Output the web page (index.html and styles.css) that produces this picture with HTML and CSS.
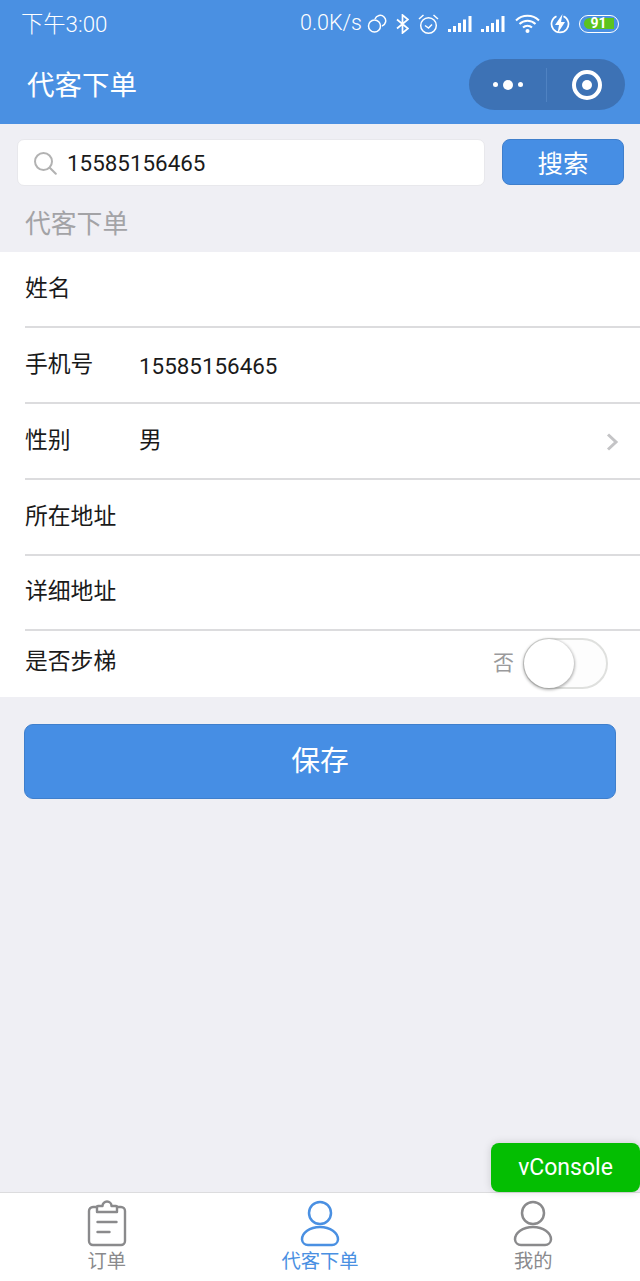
FILE: index.html
```html
<!DOCTYPE html>
<html lang="zh">
<head>
<meta charset="utf-8">
<title>代客下单</title>
<link rel="stylesheet" href="styles.css">
</head>
<body>
<div class="app">
  <header class="header">
    <div class="status">
      <span class="time">下午3:00</span>
      <div class="status-right">
        <span class="speed">0.0K/s</span>
        <svg class="si" width="20" height="20" viewBox="0 0 20 20" fill="none" stroke="#fff" stroke-width="1.500"><circle cx="7.500" cy="12" r="6"/><path d="M8 5a5.500 5.500 0 1 1 7 7"/></svg>
        <svg class="si bt" width="13" height="20" viewBox="0 0 13 20" fill="none" stroke="#fff" stroke-width="1.700"><path d="M1 5.500l11 9-5.500 4.500V1L12 5.500l-11 9"/></svg>
        <svg class="si alarm" width="21" height="22" viewBox="0 0 21 22" fill="none" stroke="#fff" stroke-width="1.500"><circle cx="10.500" cy="12.500" r="7.800"/><path d="M7 12.500l3.500 2.500 3.500-3.500M1 6l4.500-4M20 6l-4.500-4"/></svg>
        <svg class="si sig" width="24" height="18" viewBox="0 0 24 18" fill="#fff"><rect x="0" y="14" width="3" height="3"/><rect x="5" y="11" width="3" height="6"/><rect x="10" y="8" width="3" height="9"/><rect x="15" y="4.500" width="3" height="12.500"/><rect x="20.500" y="1" width="3" height="16"/></svg>
        <svg class="si sig" width="24" height="18" viewBox="0 0 24 18" fill="#fff"><rect x="0" y="14" width="3" height="3"/><rect x="5" y="11" width="3" height="6"/><rect x="10" y="8" width="3" height="9"/><rect x="15" y="4.500" width="3" height="12.500"/><rect x="20.500" y="1" width="3" height="16"/></svg>
        <svg class="si wifi" width="25" height="20" viewBox="0 0 25 20" fill="none" stroke="#fff" stroke-width="2"><path d="M1 6.500a16.500 16.500 0 0 1 23 0M4.500 10a11.500 11.500 0 0 1 16 0M8 13.500a6.500 6.500 0 0 1 9 0"/><circle cx="12.500" cy="17" r="2" fill="#fff" stroke="none"/></svg>
        <svg class="si flash" width="20" height="20" viewBox="0 0 20 20" fill="none"><path d="M6.500 2.200a8.500 8.500 0 1 0 7 0" stroke="#fff" stroke-width="1.700"/><path d="M12.500 0L5 11h4l-1.500 8.500L15 8h-4z" fill="#fff"/></svg>
        <div class="battery"><span class="battery-fill">91</span></div>
      </div>
    </div>
    <div class="nav">
      <h1 class="nav-title">代客下单</h1>
      <div class="capsule">
        <div class="cap-part cap-dots"><i class="dot"></i><i class="dot dot-big"></i><i class="dot"></i></div>
        <div class="cap-sep"></div>
        <div class="cap-part cap-right"><span class="target"></span></div>
      </div>
    </div>
  </header>

  <main class="main">
    <div class="search-row">
      <div class="search-box">
        <svg class="search-icon" width="24" height="24" viewBox="0 0 24 24" fill="none" stroke="#b2b2b2" stroke-width="2"><circle cx="10.500" cy="10.500" r="8.500"/><path d="M16.800 16.800l6 6" stroke-linecap="round"/></svg>
        <span class="search-text">15585156465</span>
      </div>
      <button class="search-btn">搜索</button>
    </div>
    <div class="section-title">代客下单</div>
    <div class="form">
      <div class="row"><span class="label">姓名</span></div>
      <div class="row"><span class="label">手机号</span><span class="value num">15585156465</span></div>
      <div class="row"><span class="label">性别</span><span class="value">男</span><svg class="chevron" width="13" height="18" viewBox="0 0 13 18" fill="none" stroke="#c4c4c6" stroke-width="3"><path d="M2 1.500l8 7.500-8 7.500"/></svg></div>
      <div class="row"><span class="label">所在地址</span></div>
      <div class="row row-short"><span class="label">详细地址</span></div>
      <div class="row row-last"><span class="label">是否步梯</span>
        <div class="switch-wrap"><span class="switch-label">否</span><div class="switch"><div class="knob"></div></div></div>
      </div>
    </div>
    <button class="save-btn">保存</button>
  </main>

  <nav class="tabbar">
    <div class="tab">
      <svg width="40" height="47" viewBox="0 0 40 47" fill="none" stroke="#8a8a8c" stroke-width="2.400" stroke-linejoin="round" stroke-linecap="round"><path d="M10 7H6a4 4 0 0 0-4 4v30a4 4 0 0 0 4 4h28a4 4 0 0 0 4-4V11a4 4 0 0 0-4-4h-4"/><path d="M10 12V7a1 1 0 0 1 1-1h4.500a4.500 4.500 0 0 1 9 0H29a1 1 0 0 1 1 1v5z"/><path d="M10.500 22h19M10.500 32h12"/></svg>
      <span class="tab-label">订单</span>
    </div>
    <div class="tab tab-active">
      <svg width="42" height="47" viewBox="0 0 42 47" fill="none" stroke="#4a90e2" stroke-width="2.500"><circle cx="21" cy="13" r="11"/><path d="M9 45a6 6 0 0 1-6-5.500C3 33 10.500 27 21 27s18 6 18 12.500a6 6 0 0 1-6 5.500z"/></svg>
      <span class="tab-label">代客下单</span>
    </div>
    <div class="tab">
      <svg width="42" height="47" viewBox="0 0 42 47" fill="none" stroke="#8a8a8c" stroke-width="2.500"><circle cx="21" cy="13" r="11"/><path d="M9 45a6 6 0 0 1-6-5.500C3 33 10.500 27 21 27s18 6 18 12.500a6 6 0 0 1-6 5.500z"/></svg>
      <span class="tab-label">我的</span>
    </div>
  </nav>

  <div class="vconsole">vConsole</div>
</div>
</body>
</html>
```

FILE: styles.css
```css
* { box-sizing: border-box; }
html, body { margin: 0; padding: 0; }
body {
  font-family: Roboto, "Noto Sans CJK SC", sans-serif;
  color: #1a1a1a;
  background: #efeff4;
}
.app {
  position: relative;
  width: 640px;
  height: 1281px;
  display: flex;
  flex-direction: column;
  overflow: hidden;
}
.header { height: 124px; background: #4a90e2; color: #fff; flex: none; }
.status {
  height: 47px;
  padding: 0 21px;
  display: flex;
  justify-content: space-between;
  align-items: center;
}
.time { font-size: 22.300px; font-weight: 300; padding-bottom: 4px; }
.status-right { display: flex; align-items: center; }
.speed { font-size: 21.500px; font-weight: 300; margin-right: 5px; padding-bottom: 2px; }
.si { display: block; flex: none; }
.bt, .alarm, .sig { margin-left: 9px; }
.wifi, .flash { margin-left: 10px; }
.battery {
  margin-left: 9px;
  width: 40px;
  height: 18px;
  border: 1.500px solid #fff;
  border-radius: 9px;
  padding: 2px 3.500px;
  overflow: hidden;
}
.battery-fill {
  display: block;
  width: 30px;
  height: 11px;
  background: #5cc31e;
  border-radius: 6px 0 0 6px;
  font-size: 14px;
  line-height: 11px;
  font-weight: 700;
  text-align: center;
  color: #fff;
}
.nav {
  height: 77px;
  padding: 0 15px 0 27px;
  display: flex;
  justify-content: space-between;
  align-items: center;
}
.nav-title { margin: 0; font-size: 27.500px; font-weight: 400; line-height: 1; }
.capsule {
  width: 156px;
  height: 51px;
  border-radius: 26px;
  background: #3d72b5;
  display: flex;
  align-items: center;
  position: relative;
  top: -1px;
}
.cap-part { display: flex; justify-content: center; align-items: center; }
.cap-dots { width: 77px; gap: 5px; }
.cap-right { flex: 1; padding-left: 2px; }
.cap-sep { width: 1px; height: 34px; background: #4f82c2; flex: none; }
.dot { width: 5px; height: 5px; border-radius: 50%; background: #fff; display: block; }
.dot-big { width: 10px; height: 10px; }
.target {
  width: 30px;
  height: 30px;
  border-radius: 50%;
  border: 4px solid #fff;
  display: flex;
}
.target::after {
  content: "";
  width: 10px;
  height: 10px;
  margin: auto;
  border-radius: 50%;
  background: #fff;
}
.main { flex: 1; min-height: 0; }
.search-row {
  display: flex;
  align-items: flex-start;
  padding: 15px 16px 0 17px;
  gap: 17px;
}
.search-box {
  flex: 1;
  height: 47px;
  background: #fff;
  border: 1px solid #e8e8ec;
  border-radius: 7px;
  display: flex;
  align-items: center;
  padding: 1px 0 0 15px;
}
.search-text { font-size: 22.400px; margin-left: 10px; color: #1a1a1a; }
.search-icon { flex: none; }
.search-btn {
  width: 122px;
  height: 46px;
  background: #468ee4;
  border: 1px solid #3f7fcc;
  border-radius: 8px;
  color: #fff;
  font: 400 25.500px "Noto Sans CJK SC", sans-serif;
  padding: 0 0 2px;
}
.section-title {
  height: 66px;
  padding: 23px 0 0 25px;
  font-size: 25.800px;
  line-height: 30px;
  color: #a3a3a6;
}
.form { background: #fff; }
.row {
  height: 76px;
  padding: 0 21px 0 25px;
  display: flex;
  align-items: center;
  font-size: 22.800px;
  background-image: linear-gradient(#dcdcde, #dcdcde);
  background-size: calc(100% - 25px) 2px;
  background-position: 25px 100%;
  background-repeat: no-repeat;
}
.row-short { height: 75px; }
.row-last { height: 66px; padding-bottom: 2px; background-image: none; }
.label { width: 114px; flex: none; padding-bottom: 8px; }
.row-last .label { padding-bottom: 7px; }
.value { flex: 1; color: #1a1a1a; padding-bottom: 8px; }
.num { font-size: 22.400px; padding-bottom: 0; }
.chevron { flex: none; }
.switch-wrap { margin-left: auto; display: flex; align-items: center; gap: 9px; margin-right: 11px; }
.switch-label { font-size: 21px; color: #9a9a9c; padding-bottom: 4px; }
.switch {
  width: 85px;
  height: 51px;
  border: 2px solid #dfe0de;
  border-radius: 26px;
  background: #fdfdfd;
  position: relative;
}
.knob {
  position: absolute;
  left: -1px;
  top: -1px;
  width: 50px;
  height: 49px;
  background: #fff;
  border-radius: 50%;
  box-shadow: 0 1px 3px 1px rgba(0,0,0,.3);
}
.save-btn {
  display: block;
  width: 592px;
  height: 75px;
  margin: 27px 0 0 24px;
  background: #468ee4;
  border: 1px solid #3f7fcc;
  border-radius: 9px;
  color: #fff;
  font: 400 28.800px "Noto Sans CJK SC", sans-serif;
  padding: 0 0 6px;
}
.tabbar {
  flex: none;
  height: 89px;
  background: #fff;
  border-top: 1px solid #dcdcde;
  display: grid;
  grid-template-columns: repeat(3, 1fr);
}
.tab {
  display: flex;
  flex-direction: column;
  align-items: center;
  padding-top: 7px;
  color: #8a8a8c;
}
.tab-active { color: #4a90e2; }
.tab svg { display: block; flex: none; }
.tab-label { font-size: 19.300px; line-height: 22px; margin-top: 4px; }
.vconsole {
  position: absolute;
  right: 0;
  top: 1143px;
  width: 149px;
  height: 49px;
  background: #04be02;
  border-radius: 8px;
  color: #fff;
  font-size: 23px;
  line-height: 49px;
  text-align: center;
  box-shadow: 0 0 8px rgba(0,0,0,.15);
}
```
